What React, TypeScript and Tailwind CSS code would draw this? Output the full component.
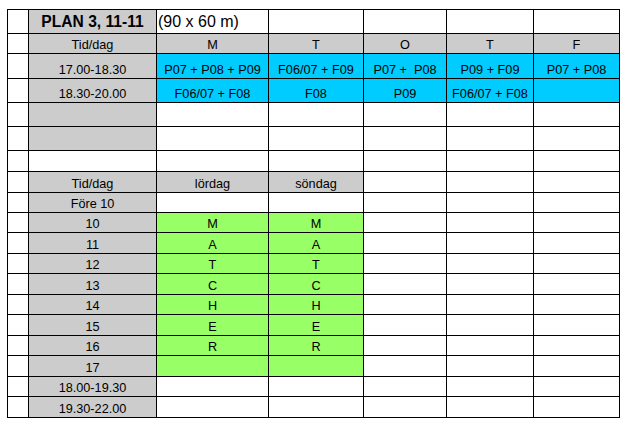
import React from 'react';

type Cell = { t?: string; bg: string; kind?: 'title' | 'note' };

const W = 'bg-white';
const G = 'bg-[#cccccc]';
const B = 'bg-[#00ccff]';
const L = 'bg-[#99ff66]';

const blank = (n: number): Cell[] => Array.from({ length: n }, () => ({ bg: W }));

const match = ['M', 'A', 'T', 'C', 'H', 'E', 'R', ''];

const rows: Cell[][] = [
  [{ bg: W }, { t: 'PLAN 3, 11-11', bg: G, kind: 'title' }, { t: '(90 x 60 m)', bg: W, kind: 'note' }, ...blank(4)],
  [{ bg: W }, { t: 'Tid/dag', bg: G }, { t: 'M', bg: G }, { t: 'T', bg: G }, { t: 'O', bg: G }, { t: 'T', bg: G }, { t: 'F', bg: G }],
  [
    { bg: W },
    { t: '17.00-18.30', bg: G },
    { t: 'P07 + P08 + P09', bg: B },
    { t: 'F06/07 + F09', bg: B },
    { t: 'P07 +  P08', bg: B },
    { t: 'P09 + F09', bg: B },
    { t: 'P07 + P08', bg: B },
  ],
  [
    { bg: W },
    { t: '18.30-20.00', bg: G },
    { t: 'F06/07 + F08', bg: B },
    { t: 'F08', bg: B },
    { t: 'P09', bg: B },
    { t: 'F06/07 + F08', bg: B },
    { bg: B },
  ],
  [{ bg: W }, { bg: G }, ...blank(5)],
  [{ bg: W }, { bg: G }, ...blank(5)],
  blank(7),
  [{ bg: W }, { t: 'Tid/dag', bg: G }, { t: 'lördag', bg: G }, { t: 'söndag', bg: G }, ...blank(3)],
  [{ bg: W }, { t: 'Före 10', bg: G }, ...blank(5)],
  ...match.map((m, i): Cell[] => [
    { bg: W },
    { t: String(10 + i), bg: G },
    { t: m, bg: L },
    { t: m, bg: L },
    ...blank(3),
  ]),
  [{ bg: W }, { t: '18.00-19.30', bg: G }, ...blank(5)],
  [{ bg: W }, { t: '19.30-22.00', bg: G }, ...blank(5)],
];

function GridCell({ cell }: { cell: Cell }) {
  if (cell.kind === 'title') {
    return (
      <div className={`${cell.bg} flex items-center justify-center text-[15.6px] font-bold`}>
        {cell.t}
      </div>
    );
  }
  if (cell.kind === 'note') {
    return (
      <div className={`${cell.bg} flex items-center pl-px text-[16px] whitespace-nowrap`}>
        {cell.t}
      </div>
    );
  }
  return (
    <div className={`${cell.bg} flex items-end justify-center pb-px text-[12.7px] leading-none whitespace-pre`}>
      {cell.t}
    </div>
  );
}

export default function App() {
  return (
    <div className="w-[640px] h-[432px] bg-white pl-[7px] pt-[9px] text-black" style={{ fontFamily: '"Liberation Sans", Arial, sans-serif' }}>
      <div className="grid w-[613px] gap-px bg-black p-px grid-cols-[20px_127px_111px_94px_82px_86px_85px] grid-rows-[23px_19px_24px_23px_23px_23px_20px_20px_19px_19px_20px_19px_20px_19px_20px_19px_20px_19px_20px]">
        {rows.map((row, r) => row.map((cell, c) => <GridCell key={`${r}-${c}`} cell={cell} />))}
      </div>
    </div>
  );
}
